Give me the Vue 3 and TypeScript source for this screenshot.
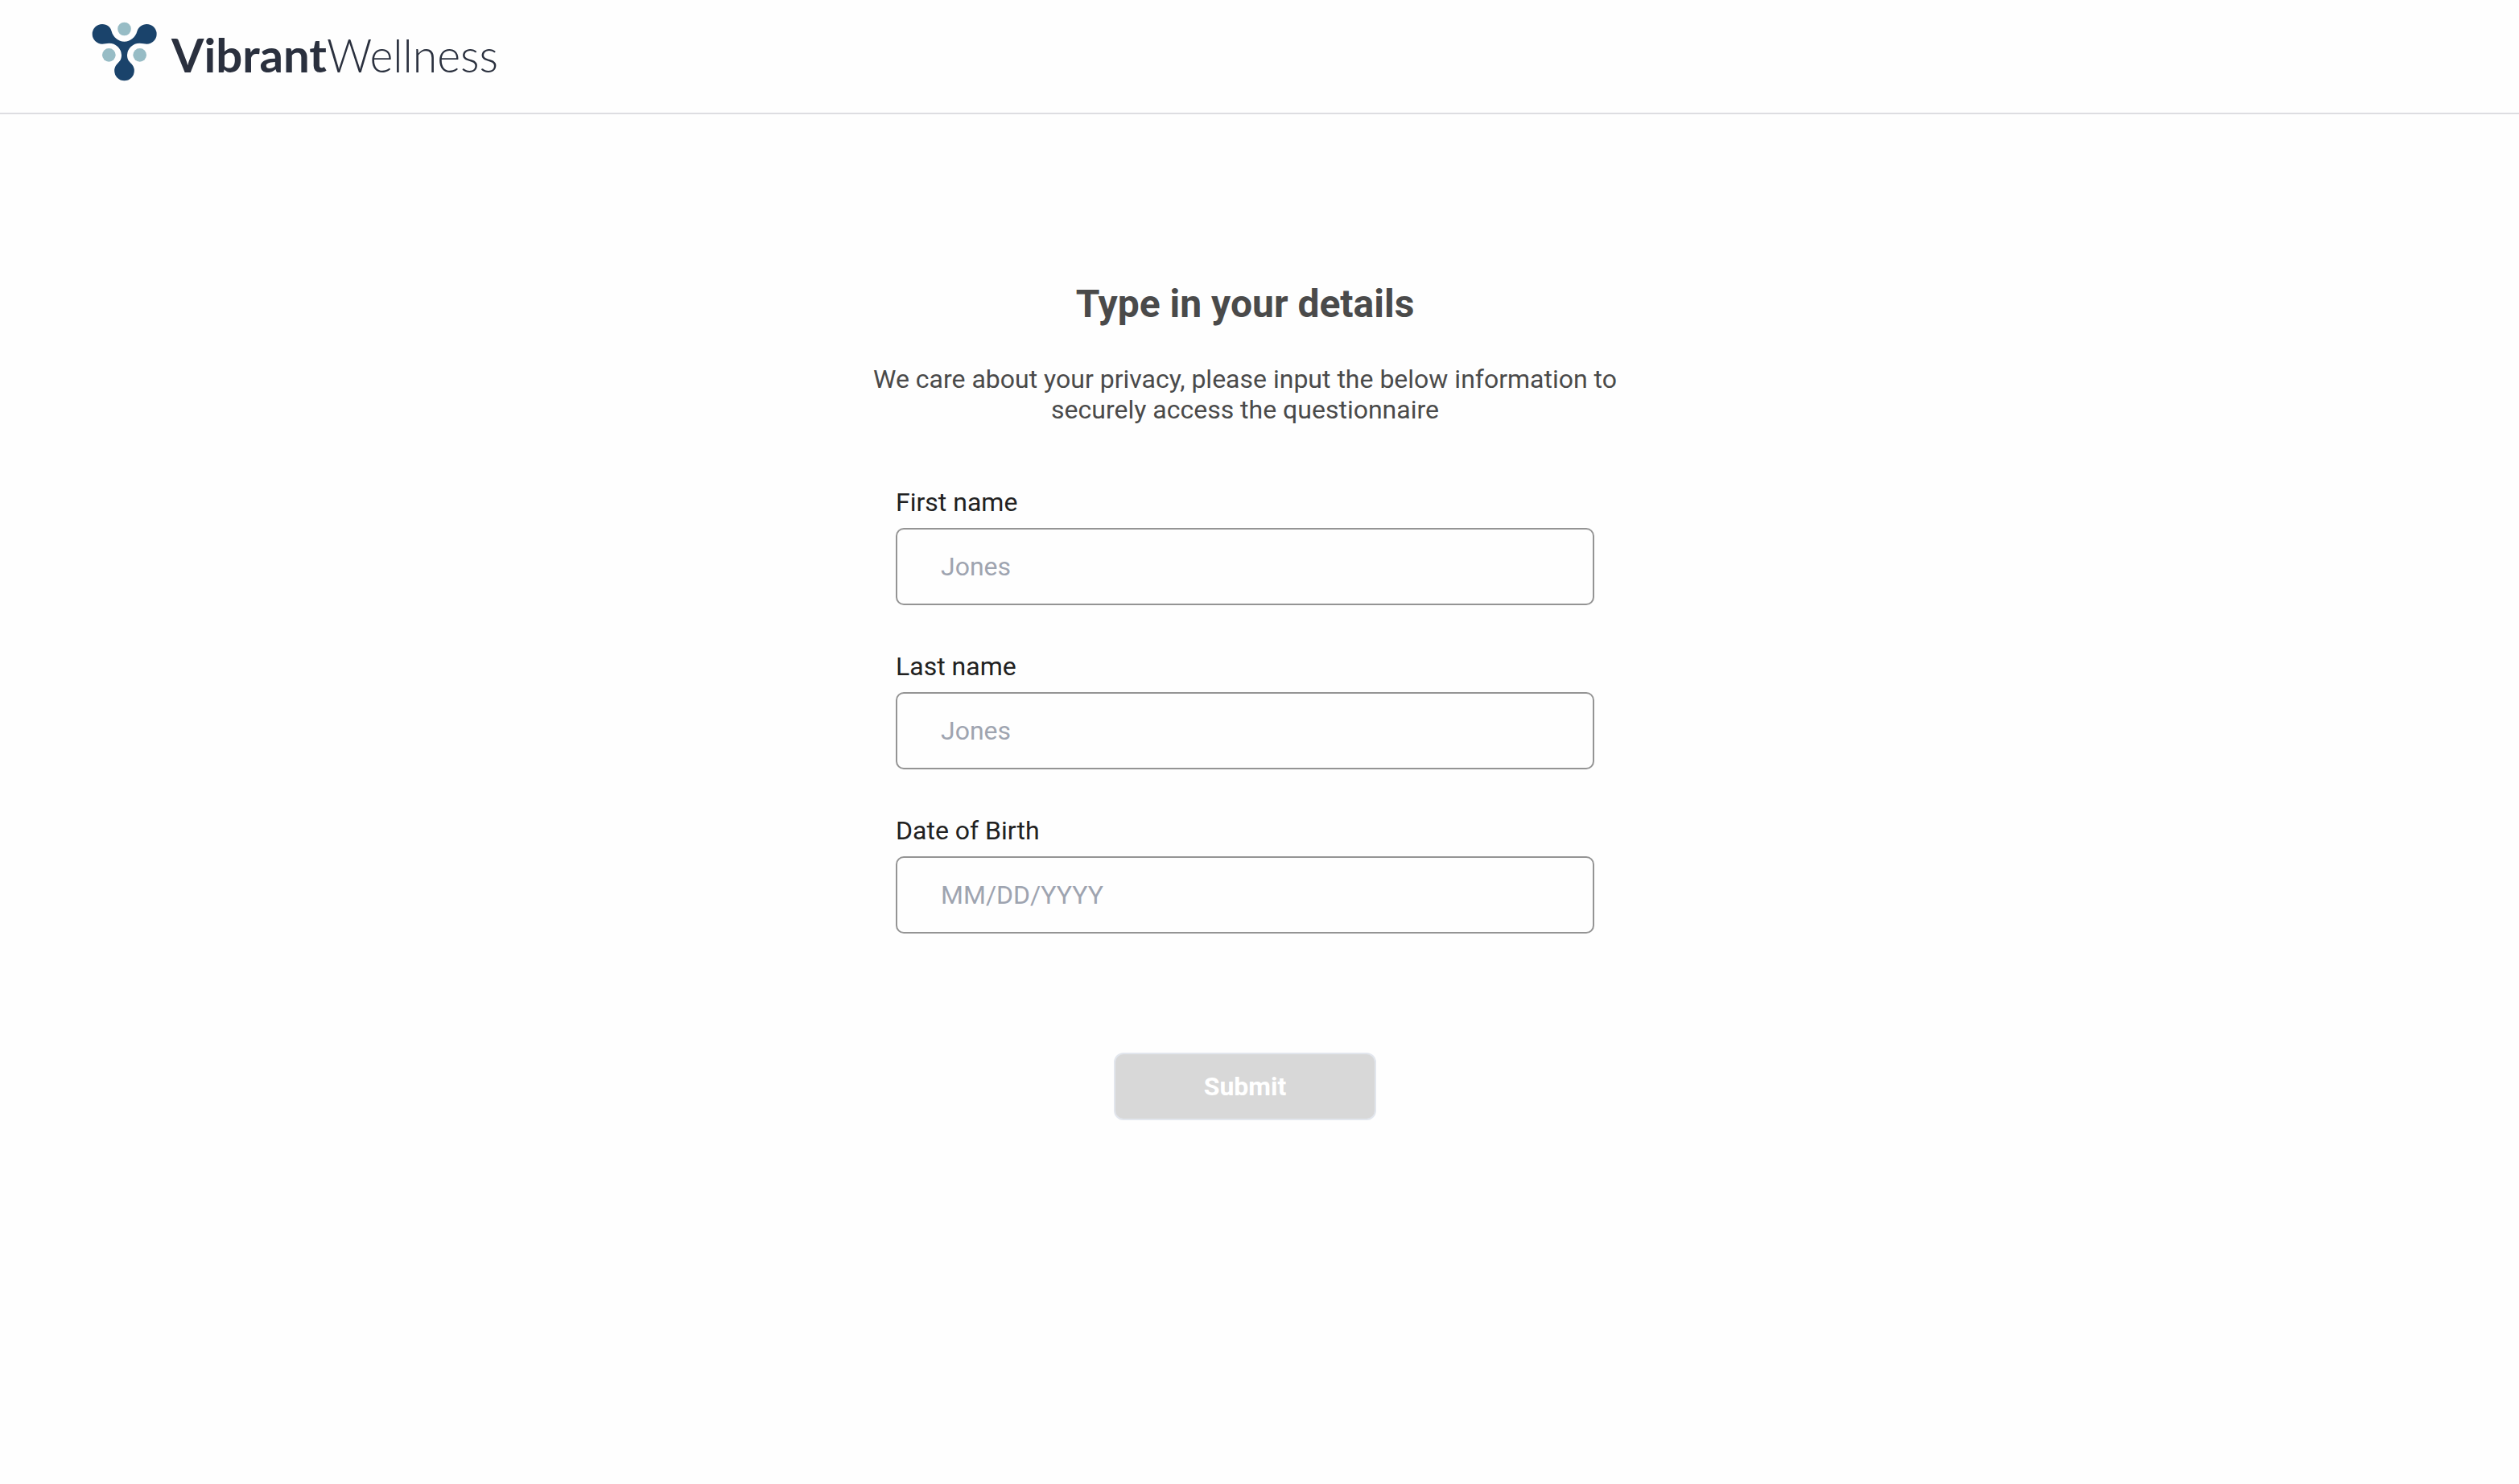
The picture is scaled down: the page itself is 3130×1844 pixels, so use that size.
<script setup lang="ts">
import { ref } from 'vue'

interface Field {
  id: string
  label: string
  placeholder: string
}

const fields: Field[] = [
  { id: 'first-name', label: 'First name', placeholder: 'Jones' },
  { id: 'last-name', label: 'Last name', placeholder: 'Jones' },
  { id: 'dob', label: 'Date of Birth', placeholder: 'MM/DD/YYYY' },
]

const values = ref<Record<string, string>>({})
</script>

<template>
  <div class="page">
    <header class="header">
      <svg class="logo" width="540" height="100" viewBox="0 0 540 100">
        <g transform="scale(0.33333)">
          <path
            fill="#1a436b"
            d="M81 45C100 45 112 56 116 72C122 94 141 110 163.5 110C186 110 205 94 211 72C216 56 230 45 247 45A37 37 0 0 1 247 119C240 119 232 116 220 116A46 46 0 0 0 174 160C174 178 181 184 190 193A37 37 0 1 1 137 193C146 184 153 178 153 160A46 46 0 0 0 107 116C96 116 89 119 81 119A37 37 0 0 1 81 45Z"
          />
          <circle cx="163.5" cy="63" r="25" fill="#97bcc5" />
          <circle cx="106" cy="160" r="25" fill="#97bcc5" />
          <circle cx="221" cy="160" r="25" fill="#97bcc5" />
        </g>
        <text class="brand bold" x="113" y="74.7" textLength="193" lengthAdjust="spacingAndGlyphs">Vibrant</text>
        <text class="brand light" x="306" y="74.7" textLength="213" lengthAdjust="spacingAndGlyphs">Wellness</text>
      </svg>
    </header>

    <main class="content">
      <h1 class="title">Type in your details</h1>
      <p class="intro">
        We care about your privacy, please input the below information to<br />securely access the questionnaire
      </p>
      <form class="form" @submit.prevent>
        <div v-for="field in fields" :key="field.id" class="field">
          <label class="label" :for="field.id">{{ field.label }}</label>
          <input
            :id="field.id"
            v-model="values[field.id]"
            class="input"
            type="text"
            :placeholder="field.placeholder"
          />
        </div>
        <button class="submit" type="submit" disabled>Submit</button>
      </form>
    </main>
  </div>
</template>

<style>
body {
  background: #fefefe;
}
</style>

<style scoped>
.page {
  box-sizing: border-box;
  min-height: 1844px;
  font-family: Roboto, 'Liberation Sans', sans-serif;
  color: #4a4a4a;
}

.header {
  box-sizing: border-box;
  height: 142px;
  padding: 15px 0 0 100px;
  border-bottom: 2px solid #dddde1;
}

.logo {
  display: block;
}

.brand {
  font-family: Lato, sans-serif;
  font-size: 57.5px;
  fill: #2a303e;
}

.bold {
  font-weight: 700;
}

.light {
  font-weight: 300;
}

.content {
  display: flex;
  flex-direction: column;
  align-items: center;
  padding: 208px 36px 0 0;
}

.title {
  margin: 0;
  font-size: 48px;
  font-weight: 700;
  line-height: 56px;
}

.intro {
  margin: 46px 0 0;
  font-size: 32px;
  line-height: 38px;
  text-align: center;
  white-space: nowrap;
}

.form {
  display: flex;
  flex-direction: column;
  align-items: center;
  width: 868px;
  margin-top: 77px;
}

.field {
  display: flex;
  flex-direction: column;
  width: 100%;
  height: 147px;
  margin-bottom: 57px;
}

.label {
  margin-bottom: 13px;
  font-size: 32px;
  line-height: 38px;
  color: #212121;
}

.input {
  box-sizing: border-box;
  width: 100%;
  height: 96px;
  padding: 0 54px;
  border: 2px solid #949494;
  border-radius: 10px;
  background: #fefefe;
  font: 32px Roboto, sans-serif;
  color: #212121;
  outline: none;
}

.input::placeholder {
  color: #9ea4b0;
  opacity: 1;
}

.submit {
  box-sizing: border-box;
  width: 326px;
  height: 84px;
  margin-top: 91px;
  padding: 0;
  border: 2px solid #e2e6ed;
  border-radius: 12px;
  background: #d8d8d8;
  font: 700 32px Roboto, sans-serif;
  color: #fff;
}
</style>
